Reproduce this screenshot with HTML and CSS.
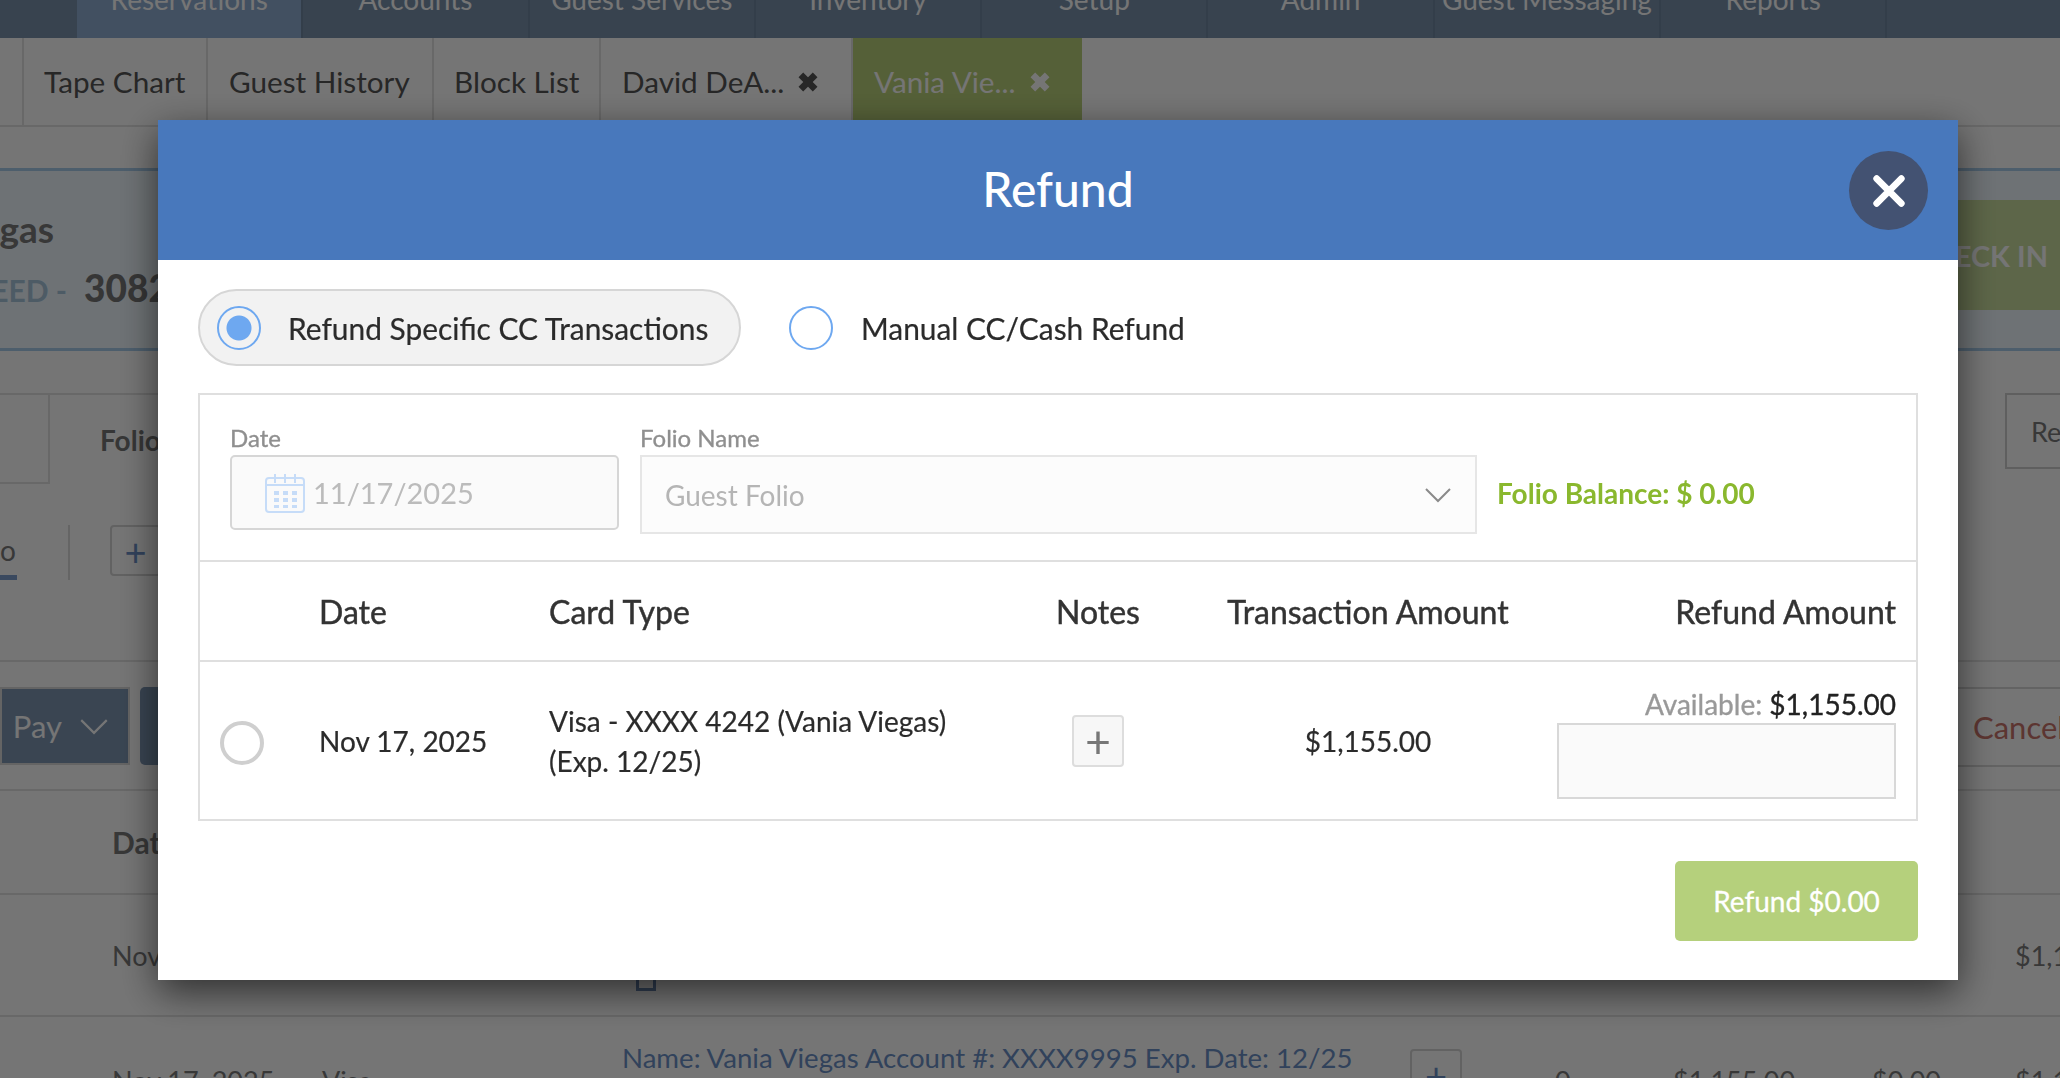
FILE: index.html
```html
<!DOCTYPE html>
<html lang="en">
<head>
<meta charset="utf-8">
<title>Refund</title>
<link rel="stylesheet" href="styles.css">
</head>
<body>
<div class="page">
  <nav class="nav">
    <a class="nav-item nav-active">Reservations</a>
    <a class="nav-item">Accounts</a>
    <a class="nav-item">Guest Services</a>
    <a class="nav-item">Inventory</a>
    <a class="nav-item">Setup</a>
    <a class="nav-item">Admin</a>
    <a class="nav-item">Guest Messaging</a>
    <a class="nav-item">Reports</a>
  </nav>
  <div class="tabs">
    <a class="tab tab-first">Tape Chart</a>
    <a class="tab tab-second">Guest History</a>
    <a class="tab tab-third">Block List</a>
    <a class="tab tab-fourth">David DeA...
      <svg class="tab-x" viewBox="0 0 20 20"><path d="M3.5 3.5l13 13M16.5 3.5l-13 13"/></svg>
    </a>
    <a class="tab tab-green">Vania Vie...
      <svg class="tab-x" viewBox="0 0 20 20"><path d="M3.5 3.5l13 13M16.5 3.5l-13 13"/></svg>
    </a>
  </div>
  <section class="guest">
    <div class="guest-info">
      <div class="guest-name"><span>Vania Viegas</span></div>
      <div class="guest-status"><span class="status-text"><span>GUARANTEED -</span></span><strong class="status-id">3082145</strong></div>
    </div>
    <button class="checkin">CHECK IN</button>
  </section>
  <section class="folio-row">
    <div class="folio-left">
      <div class="folio-box"></div>
      <strong class="folio-title">Folio</strong>
    </div>
    <div class="folio-right">Re</div>
  </section>
  <section class="subtabs">
    <span class="subtab-current">o</span>
    <span class="subtab-sep"></span>
    <span class="plus-box subtab-plus">+</span>
  </section>
  <section class="actions">
    <button class="btn-pay">Pay
      <svg class="pay-chev" viewBox="0 0 28 16"><path d="M2 2l12 12L26 2"/></svg>
    </button>
    <button class="btn-dark"></button>
    <span class="cancel">Cancel</span>
  </section>
  <div class="ledger ledger-head"><strong class="col-date">Date</strong></div>
  <div class="ledger ledger-one">
    <span class="col-date">Nov 17, 2025</span>
    <span class="check"></span>
    <span class="col-end">$1,155.00</span>
  </div>
  <div class="ledger ledger-two">
    <span class="col-date">Nov 17, 2025</span>
    <span class="col-card">Visa</span>
    <span class="col-note">Name: Vania Viegas Account #: XXXX9995 Exp. Date: 12/25</span>
    <span class="plus-box ledger-plus">+</span>
    <span class="col-zero">0</span>
    <span class="col-amt">$1,155.00</span>
    <span class="col-ref">$0.00</span>
    <span class="col-end2">$1,155.00</span>
  </div>
</div>

<div class="overlay"></div>

<div class="modal">
  <header class="modal-head">
    <h1 class="modal-title">Refund</h1>
    <button class="modal-close" aria-label="Close">
      <svg viewBox="0 0 40 40"><path d="M7 7l26 26M33 7L7 33"/></svg>
    </button>
  </header>
  <div class="modal-body">
    <div class="choices">
      <label class="choice choice-on"><span class="radio radio-on"></span>Refund Specific CC Transactions</label>
      <label class="choice"><span class="radio"></span>Manual CC/Cash Refund</label>
    </div>
    <div class="box">
      <div class="filters">
        <div class="field field-date">
          <span class="field-label">Date</span>
          <div class="date-input">
            <svg class="cal" viewBox="0 0 40 40">
              <rect x="1" y="5" width="38" height="34" rx="3" class="cal-line"/>
              <path d="M1 12h38M10 1v9M20 1v9M30 1v9" class="cal-line"/>
              <path d="M9 18h5v4H9zM18 18h5v4h-5zM27 18h5v4h-5zM9 25h5v4H9zM18 25h5v4h-5zM27 25h5v4h-5zM9 32h5v3H9zM18 32h5v3h-5zM27 32h5v3h-5z" class="cal-dots"/>
            </svg>
            <span>11/17/2025</span>
          </div>
        </div>
        <div class="field field-folio">
          <span class="field-label">Folio Name</span>
          <div class="select">
            <span>Guest Folio</span>
            <svg class="select-chev" viewBox="0 0 26 16"><path d="M1 2l12 12L25 2"/></svg>
          </div>
        </div>
        <div class="balance">Folio Balance: $ 0.00</div>
      </div>
      <div class="grid grid-head">
        <span></span>
        <span>Date</span>
        <span>Card Type</span>
        <span class="t-center">Notes</span>
        <span class="t-center">Transaction Amount</span>
        <span class="t-right">Refund Amount</span>
      </div>
      <div class="grid grid-row">
        <span class="radio-grey"></span>
        <span>Nov 17, 2025</span>
        <span class="card-cell">Visa - XXXX 4242 (Vania Viegas)<br>(Exp. 12/25)</span>
        <span class="t-center"><button class="note-add">+</button></span>
        <span class="t-center">$1,155.00</span>
        <div class="refund-cell">
          <div class="available"><span class="available-label">Available:</span> <span class="available-val">$1,155.00</span></div>
          <input class="refund-input" type="text" aria-label="Refund amount">
        </div>
      </div>
    </div>
    <div class="modal-foot">
      <button class="refund-btn">Refund $0.00</button>
    </div>
  </div>
</div>
</body>
</html>
```
FILE: styles.css
```css
* { box-sizing: border-box; }
html, body { margin: 0; padding: 0; height: 100%; overflow: hidden; }
body { font-family: Lato, "Noto Sans", sans-serif; color: #333; background: #fff; }
button { font-family: inherit; }

.page { width: 2060px; height: 1078px; overflow: hidden; display: flex; flex-direction: column; font-size: 27px; color: #7a7a7a; }

/* top nav */
.nav { height: 38px; flex: none; display: flex; padding-left: 77px; background: #7a92ad; overflow: hidden; }
.nav-item { width: 226.3px; height: 38px; flex: none; padding-bottom: 25px; display: flex; align-items: flex-end; justify-content: center; color: #fff; font-size: 28px; line-height: 28px; border-right: 2px solid #6f87a2; }
.nav-active { background: #90aed3; }

/* tabs */
.tabs { height: 89px; flex: none; display: flex; background: #fff; border-bottom: 2px solid #e3e3e3; font-size: 29.7px; color: #555; }
.tab { height: 87px; display: flex; align-items: center; padding-left: 21px; border-right: 2px solid #e3e3e3; flex: none; white-space: nowrap; }
.tab-first { width: 186px; margin-left: 22px; padding-left: 20px; border-left: 2px solid #e3e3e3; }
.tab-second { width: 226px; }
.tab-third { width: 167px; padding-left: 20px; }
.tab-fourth { width: 252px; }
.tab-green { width: 229px; background: #b9d17a; color: #fff; border-right: 0; }
.tab-x { width: 22px; height: 22px; margin-left: 13px; stroke: currentColor; stroke-width: 6; fill: none; }

/* guest header */
.guest { margin-top: 41px; height: 183px; flex: none; display: flex; justify-content: space-between; align-items: center; background: #f0f9ff; border-top: 3px solid #a8cdec; border-bottom: 3px solid #a8cdec; }
.guest-info { margin-top: -1px; }
.guest-name { width: 54px; display: flex; justify-content: flex-end; font-size: 37px; font-weight: 700; line-height: 40px; margin-bottom: 20px; white-space: nowrap; }
.guest-status { display: flex; align-items: baseline; font-size: 30px; line-height: 38px; color: #a9c6dd; font-weight: 700; white-space: nowrap; }
.status-text { width: 67px; display: flex; justify-content: flex-end; flex: none; }
.status-id { margin-left: 17px; color: #777; font-size: 37px; }
.checkin { width: 102px; height: 110px; border: 0; background: #cbdf9f; color: #fff; font-size: 29px; font-weight: 700; white-space: nowrap; overflow: hidden; display: flex; align-items: center; justify-content: flex-end; padding: 0 12px 0 0; margin-top: -9px; }

/* folio row */
.folio-row { margin-top: 42px; height: 91px; flex: none; display: flex; justify-content: space-between; }
.folio-left { display: flex; align-items: center; gap: 50px; width: 160px; border-top: 2px solid #e3e3e3; }
.folio-box { width: 50px; height: 89px; border-right: 2px solid #e3e3e3; border-bottom: 2px solid #e3e3e3; flex: none; }
.folio-title { font-size: 28px; color: #777; }
.folio-right { width: 55px; height: 76px; border: 2px solid #cfcfcf; border-right: 0; padding-left: 24px; display: flex; align-items: center; font-size: 27px; }

/* sub tabs */
.subtabs { margin-top: 41px; height: 55px; flex: none; display: flex; align-items: stretch; }
.subtab-current { width: 17px; border-bottom: 5px solid #7fa0d0; display: flex; align-items: center; font-size: 28px; overflow: hidden; }
.subtab-sep { width: 2px; margin-left: 51px; background: #ddd; }
.plus-box { flex: none; display: flex; align-items: center; justify-content: center; border: 2px solid #d5d5d5; border-radius: 4px; color: #6c90c7; font-size: 38px; }
.subtab-plus { width: 51px; height: 51px; margin-left: 40px; }

/* actions */
.actions { margin-top: 80px; height: 129px; flex: none; border-top: 2px solid #e3e3e3; display: flex; align-items: flex-start; padding-top: 25px; }
.btn-pay { width: 130px; height: 78px; border: 2px solid #d9d9d9; background: #7e97b4; color: #fff; font-size: 31px; display: flex; align-items: center; justify-content: flex-end; padding: 0 19px 0 0; gap: 17px; }
.pay-chev { width: 30px; height: 17px; stroke: currentColor; stroke-width: 2; fill: none; }
.btn-dark { width: 60px; height: 78px; margin-left: 10px; border: 0; border-radius: 5px; background: #7e97b4; }
.cancel { margin-left: auto; width: 102px; height: 80px; padding-left: 15px; display: flex; align-items: center; color: #c9756b; font-size: 31px; white-space: nowrap; border-top: 2px solid #d8d8d8; border-bottom: 2px solid #d8d8d8; overflow: hidden; }

/* ledger */
.ledger { flex: none; display: flex; align-items: center; padding-left: 112px; border-top: 2px solid #e3e3e3; font-size: 27px; }
.ledger-head { height: 104px; font-size: 30px; }
.ledger-one { height: 122px; justify-content: space-between; position: relative; }
.ledger-two { height: 80px; align-items: flex-start; padding-top: 24px; }
.ledger-two > * { flex: none; }
.col-end { margin-right: -45px; width: 90px; overflow: hidden; }
.check { position: absolute; left: 636px; top: 76px; width: 20px; height: 20px; border: 3px solid #6c8ab5; }
.ledger-two .col-date { width: 210px; padding-top: 23px; white-space: nowrap; }
.col-card { width: 300px; padding-top: 23px; }
.col-note { width: 788px; color: #6c90c7; font-size: 27.6px; white-space: nowrap; }
.ledger-plus { width: 52px; height: 52px; margin-top: 8px; }
.col-zero { margin-left: 93px; width: 118px; padding-top: 23px; }
.col-amt { width: 199px; padding-top: 23px; }
.col-ref { width: 143px; padding-top: 23px; }
.col-end2 { padding-top: 23px; white-space: nowrap; }

/* overlay + modal */
.overlay { position: fixed; inset: 0; background: rgba(0,0,0,.54); }
.modal { position: fixed; left: 158px; top: 120px; width: 1800px; height: 860px; background: #fff; box-shadow: 0 12px 36px rgba(0,0,0,.6); display: flex; flex-direction: column; }
.modal-head { height: 140px; flex: none; background: #4878bc; display: flex; align-items: center; justify-content: center; position: relative; padding-bottom: 2px; }
.modal-title { margin: 0; color: #fff; font-size: 48px; font-weight: 500; line-height: 1; }
.modal-close { position: absolute; right: 30px; top: 31px; width: 79px; height: 79px; border-radius: 50%; border: 0; background: #435272; padding: 0; display: flex; align-items: center; justify-content: center; }
.modal-close svg { width: 38px; height: 38px; stroke: #fff; stroke-width: 7; stroke-linecap: round; fill: none; }
.modal-body { flex: 1; padding: 29px 40px 0; display: flex; flex-direction: column; }

.choices { display: flex; align-items: center; gap: 48px; height: 77px; }
.choice { display: flex; align-items: center; gap: 28px; font-size: 29.9px; color: #2b2b2b; height: 77px; -webkit-text-stroke: .2px; }
.choice-on { width: 543px; padding-left: 17px; gap: 27px; border: 2px solid #d6d6d6; border-radius: 39px; background: #f2f2f2; }
.radio { width: 44px; height: 44px; border-radius: 50%; border: 2px solid #6ea8f0; background: #fff; flex: none; }
.radio-on { background: radial-gradient(circle, #6ea8f0 0 12px, #f2f2f2 13px); }

.box { margin-top: 27px; border: 2px solid #dfdfdf; }
.filters { height: 167px; border-bottom: 2px solid #dfdfdf; display: flex; align-items: flex-start; padding: 28px 0 0 30px; }
.field { display: flex; flex-direction: column; }
.field-label { font-size: 24px; line-height: 30px; color: #8f8f8f; margin-bottom: 2px; -webkit-text-stroke: .35px; }
.field-date { width: 389px; }
.field-folio { width: 837px; margin-left: 21px; }
.date-input { height: 75px; display: flex; align-items: center; gap: 8px; padding-left: 33px; background: #fafafa; border: 2px solid #d6d6d6; border-radius: 5px; color: #bbb; font-size: 29px; }
.cal { width: 40px; height: 40px; flex: none; }
.cal-line { fill: none; stroke: #c6dcf8; stroke-width: 2; }
.cal-dots { fill: #c6dcf8; }
.select { height: 79px; display: flex; align-items: center; justify-content: space-between; padding: 0 24px 0 23px; border: 2px solid #e6e6e6; background: #fcfcfc; color: #b5b5b5; font-size: 28px; }
.select-chev { width: 26px; height: 16px; stroke: #8a8a8a; stroke-width: 2; fill: none; }
.balance { margin: 52px 0 0 20px; font-size: 28px; font-weight: 700; color: #8ab82e; line-height: 36px; white-space: nowrap; }

.grid { display: grid; grid-template-columns: 119px 230px 1fr 180px 360px 368px; align-items: center; }
.grid-head { height: 100px; border-bottom: 2px solid #dfdfdf; font-size: 32px; color: #333; -webkit-text-stroke: .45px; }
.grid-row { height: 157px; font-size: 28px; color: #2b2b2b; -webkit-text-stroke: .2px; }
.t-center { text-align: center; }
.t-right { text-align: right; padding-right: 20px; }
.radio-grey { width: 44px; height: 44px; margin: 5px 0 0 20px; border: 4px solid #cfcfcf; border-radius: 50%; }
.card-cell { line-height: 40px; }
.note-add { width: 52px; height: 52px; background: #f7f7f7; border: 2px solid #ddd; border-radius: 4px; color: #777; font-size: 44px; font-weight: 400; padding: 0; line-height: 44px; }
.refund-cell { padding-right: 20px; display: flex; flex-direction: column; align-items: flex-end; margin-top: 4px; }
.available { font-size: 28px; line-height: 37px; -webkit-text-stroke: .35px; }
.available-label { color: #999; }
.available-val { color: #222; }
.refund-input { width: 339px; height: 76px; background: #fafafa; border: 2px solid #d8d8d8; padding: 0; display: block; }

.modal-foot { margin-top: 40px; display: flex; justify-content: flex-end; }
.refund-btn { width: 243px; height: 80px; border: 0; border-radius: 5px; background: #b5d07c; color: #fff; font-size: 28px; -webkit-text-stroke: .3px; }
```
